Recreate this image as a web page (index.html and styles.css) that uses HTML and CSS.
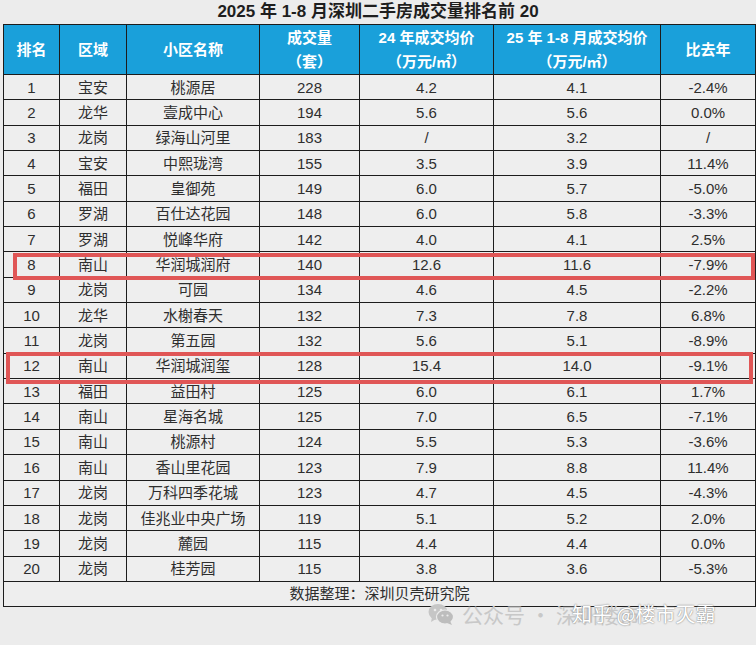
FILE: index.html
```html
<!DOCTYPE html>
<html lang="zh-CN">
<head>
<meta charset="utf-8">
<title>2025 年 1-8 月深圳二手房成交量排名前 20</title>
<link rel="stylesheet" href="styles.css">
</head>
<body>
<div class="page">
  <h1 class="title">2025 年 1-8 月深圳二手房成交量排名前 20</h1>
  <div class="grid">
    <div class="h">排名</div>
    <div class="h">区域</div>
    <div class="h">小区名称</div>
    <div class="h">成交量<br>（套）</div>
    <div class="h">24 年成交均价<br>（万元/㎡）</div>
    <div class="h">25 年 1-8 月成交均价<br>（万元/㎡）</div>
    <div class="h">比去年</div>

    <div>1</div><div>宝安</div><div>桃源居</div><div>228</div><div>4.2</div><div>4.1</div><div>-2.4%</div>
    <div>2</div><div>龙华</div><div>壹成中心</div><div>194</div><div>5.6</div><div>5.6</div><div>0.0%</div>
    <div>3</div><div>龙岗</div><div>绿海山河里</div><div>183</div><div>/</div><div>3.2</div><div>/</div>
    <div>4</div><div>宝安</div><div>中熙珑湾</div><div>155</div><div>3.5</div><div>3.9</div><div>11.4%</div>
    <div>5</div><div>福田</div><div>皇御苑</div><div>149</div><div>6.0</div><div>5.7</div><div>-5.0%</div>
    <div>6</div><div>罗湖</div><div>百仕达花园</div><div>148</div><div>6.0</div><div>5.8</div><div>-3.3%</div>
    <div>7</div><div>罗湖</div><div>悦峰华府</div><div>142</div><div>4.0</div><div>4.1</div><div>2.5%</div>
    <div>8</div><div>南山</div><div>华润城润府</div><div>140</div><div>12.6</div><div>11.6</div><div>-7.9%</div>
    <div>9</div><div>龙岗</div><div>可园</div><div>134</div><div>4.6</div><div>4.5</div><div>-2.2%</div>
    <div>10</div><div>龙华</div><div>水榭春天</div><div>132</div><div>7.3</div><div>7.8</div><div>6.8%</div>
    <div>11</div><div>龙岗</div><div>第五园</div><div>132</div><div>5.6</div><div>5.1</div><div>-8.9%</div>
    <div>12</div><div>南山</div><div>华润城润玺</div><div>128</div><div>15.4</div><div>14.0</div><div>-9.1%</div>
    <div>13</div><div>福田</div><div>益田村</div><div>125</div><div>6.0</div><div>6.1</div><div>1.7%</div>
    <div>14</div><div>南山</div><div>星海名城</div><div>125</div><div>7.0</div><div>6.5</div><div>-7.1%</div>
    <div>15</div><div>南山</div><div>桃源村</div><div>124</div><div>5.5</div><div>5.3</div><div>-3.6%</div>
    <div>16</div><div>南山</div><div>香山里花园</div><div>123</div><div>7.9</div><div>8.8</div><div>11.4%</div>
    <div>17</div><div>龙岗</div><div>万科四季花城</div><div>123</div><div>4.7</div><div>4.5</div><div>-4.3%</div>
    <div>18</div><div>龙岗</div><div>佳兆业中央广场</div><div>119</div><div>5.1</div><div>5.2</div><div>2.0%</div>
    <div>19</div><div>龙岗</div><div>麓园</div><div>115</div><div>4.4</div><div>4.4</div><div>0.0%</div>
    <div>20</div><div>龙岗</div><div>桂芳园</div><div>115</div><div>3.8</div><div>3.6</div><div>-5.3%</div>

    <div class="foot">数据整理：深圳贝壳研究院</div>
  </div>

  <div class="mark mark-a"></div>
  <div class="mark mark-b"></div>

  <div class="wm">
    <svg class="wm-icon" width="26" height="22" viewBox="0 0 26 22">
      <ellipse cx="10" cy="9" rx="9.5" ry="8" fill="#c6c6c6"/>
      <path d="M4 14 L3 19 L8 16 Z" fill="#c6c6c6"/>
      <ellipse cx="17" cy="14" rx="8.5" ry="7" fill="#bdbdbd" stroke="#ececec" stroke-width="1.2"/>
      <path d="M22 18 L24 22 L19 20 Z" fill="#bdbdbd"/>
      <circle cx="7" cy="7" r="1.3" fill="#ececec"/>
      <circle cx="13" cy="7" r="1.3" fill="#ececec"/>
      <circle cx="14.5" cy="12.5" r="1.1" fill="#ececec"/>
      <circle cx="19.5" cy="12.5" r="1.1" fill="#ececec"/>
    </svg>
    <span class="wm-gray">公众号<span class="wm-dot">·</span>深圳楼市</span>
    <span class="wm-white">知乎 @楼市灭霸</span>
  </div>
</div>
</body>
</html>
```

FILE: styles.css
```css
html, body {
  margin: 0;
  padding: 0;
  background: #ececec;
}

.page {
  position: relative;
  width: 756px;
  height: 645px;
  font-family: "Liberation Sans", "Noto Sans CJK SC", sans-serif;
  color: #2e2e2e;
}

.title {
  margin: 0;
  height: 24px;
  line-height: 24px;
  font-size: 17px;
  font-weight: bold;
  text-align: center;
  color: #1e1e1e;
}

.grid {
  margin-left: 3px;
  width: 753px;
  box-sizing: border-box;
  display: grid;
  grid-template-columns: 55px 66px 132px 99px 133px 166px 94px;
  grid-template-rows: 49px repeat(20, 24.35px) 24px;
  gap: 1px;
  padding: 1px;
  background: #1c1c1c;
}

.grid > div {
  background: #eeeeee;
  display: flex;
  align-items: center;
  justify-content: center;
  text-align: center;
  font-size: 15px;
  line-height: 1;
}

.grid > .h {
  background: #1aa0da;
  color: #ffffff;
  font-weight: bold;
  font-size: 15px;
  line-height: 24px;
}

.grid > .foot {
  grid-column: 1 / -1;
}

.mark {
  position: absolute;
  box-sizing: border-box;
  border: 4.5px solid #e05656;
}

.mark-a {
  left: 13px;
  top: 253px;
  width: 742px;
  height: 27px;
}

.mark-b {
  left: 6px;
  top: 352px;
  width: 747px;
  height: 32px;
}

.wm {
  position: absolute;
  left: 428px;
  top: 602px;
  height: 24px;
  display: flex;
  align-items: center;
  white-space: nowrap;
  font-family: "Noto Sans CJK SC", sans-serif;
  font-size: 21px;
  line-height: 24px;
}

.wm-icon {
  margin-right: 8px;
}

.wm-gray {
  color: #c8c8c8;
}

.wm-dot {
  display: inline-block;
  margin: 0 5px;
}

.wm-white {
  position: absolute;
  left: 144px;
  top: 0;
  color: #ffffff;
  font-size: 20px;
  text-shadow: 0 0 1px #8a8a8a, 0 0 2px #9a9a9a;
}
```
